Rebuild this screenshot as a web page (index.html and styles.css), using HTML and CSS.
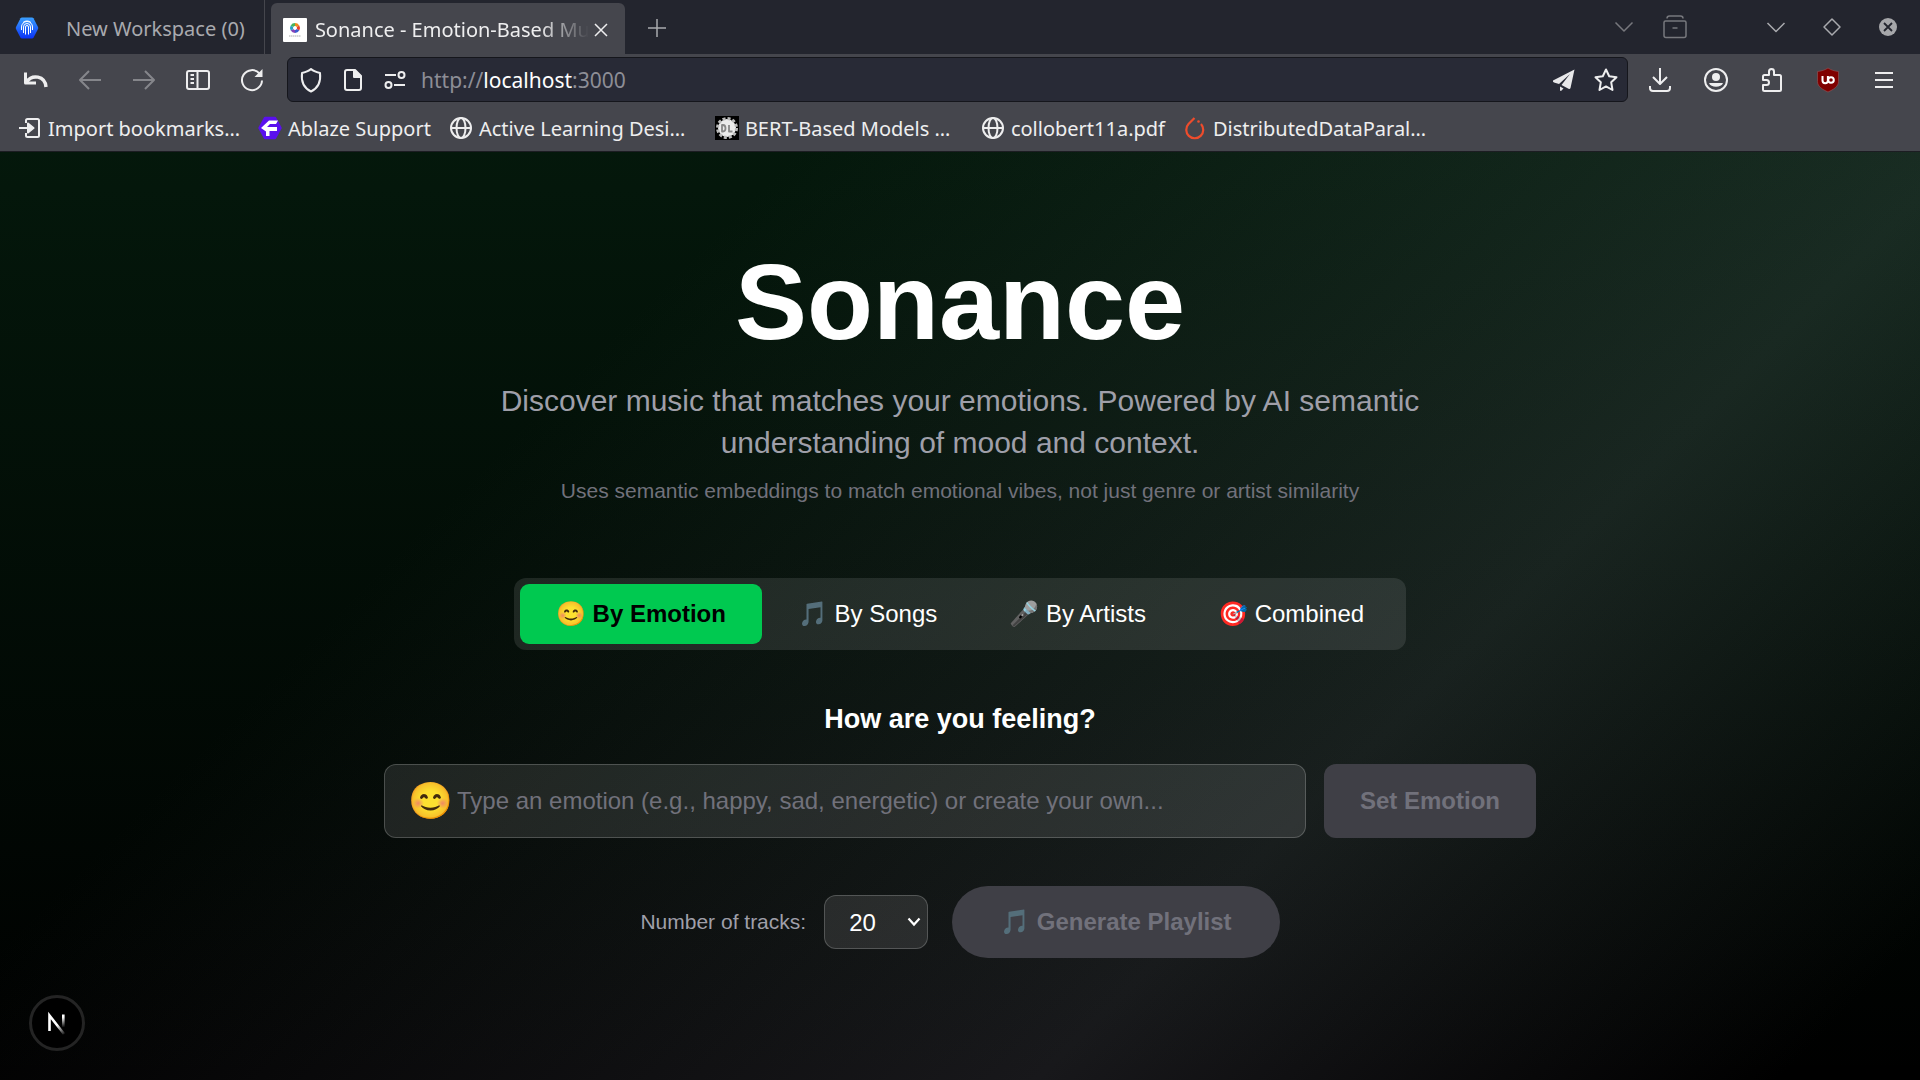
FILE: index.html
```html
<!DOCTYPE html>
<html lang="en">
<head>
    <meta charset="UTF-8">
    <meta name="viewport" content="width=device-width, initial-scale=1.0">
    <title>Sonance - Emotion-Based Music</title>
    <link rel="stylesheet" href="styles.css">
</head>
<body>
    <header class="browser">
        <div class="tab-bar">
            <button class="workspace">
                <svg width="24" height="24" viewBox="0 0 24 24">
                    <defs>
                        <linearGradient id="hex" x1="0" y1="0" x2="0" y2="1">
                            <stop offset="0" stop-color="#3aa0ff"/>
                            <stop offset="1" stop-color="#0a32f5"/>
                        </linearGradient>
                    </defs>
                    <path d="M7 1.500h10q1 0 1.500.8l4.500 8.700q.5 1 0 2l-4.500 8.700q-.5.8-1.500.8H7q-1 0-1.500-.8L1 13q-.5-1 0-2l4.500-8.700Q6 1.500 7 1.500z" fill="url(#hex)"/>
                    <path d="M6.500 14v-3a5.500 5.500 0 0 1 11 0v3M8.500 17v-6a3.500 3.500 0 0 1 7 0v6M10.500 18.500V11a1.500 1.500 0 0 1 3 0v7.500M8 6.500a6 6 0 0 1 8 0" fill="none" stroke="#fff" stroke-width="1"/>
                </svg>
                <span>New Workspace (0)</span>
            </button>
            <div class="tab">
                <svg class="favicon" width="24" height="24" viewBox="0 0 24 24">
                    <rect width="24" height="24" rx="1" fill="#fff"/>
                    <g fill="none" stroke-width="3">
                        <path d="M12 6.500a3.500 3.500 0 0 1 3 1.700" stroke="#f08b1d"/>
                        <path d="M15 8.200a3.500 3.500 0 0 1 0 3.600" stroke="#e8402c"/>
                        <path d="M15 11.800a3.500 3.500 0 0 1-3 1.700" stroke="#3b5bd0"/>
                        <path d="M12 13.500a3.500 3.500 0 0 1-3-1.700" stroke="#8442b8"/>
                        <path d="M9 11.800a3.500 3.500 0 0 1 0-3.600" stroke="#2b9fc4"/>
                        <path d="M9 8.200a3.500 3.500 0 0 1 3-1.700" stroke="#49b35b"/>
                    </g>
                    <path d="M6 18h12" stroke="#aaa" stroke-dasharray="1.500 .5"/>
                </svg>
                <span class="tab-title">Sonance - Emotion-Based Music</span>
                <button class="tab-close" aria-label="Close tab">
                    <svg width="16" height="16" viewBox="0 0 16 16"><path d="M2 2l12 12M14 2L2 14"/></svg>
                </button>
            </div>
            <button class="icon-btn new-tab" aria-label="New tab">
                <svg width="20" height="20" viewBox="0 0 20 20"><path d="M10 1v18M1 10h18"/></svg>
            </button>
            <div class="tab-tools">
                <button class="icon-btn" aria-label="List all tabs">
                    <svg width="20" height="20" viewBox="0 0 20 20"><path d="M1.500 5.500l8.500 8.500 8.500-8.500"/></svg>
                </button>
                <button class="icon-btn" aria-label="Archive">
                    <svg width="26" height="26" viewBox="0 0 26 26"><path d="M5 4.500Q5 2 7.500 2h11Q21 2 21 4.500M3.500 7h19q1.500 0 1.500 1.500v13q0 2-2 2H4q-2 0-2-2v-13Q2 7 3.500 7zM10.500 14h5"/></svg>
                </button>
            </div>
            <div class="window-controls">
                <button class="icon-btn" aria-label="Minimize">
                    <svg width="20" height="20" viewBox="0 0 20 20"><path d="M1.500 6l8.500 8.500L18.500 6"/></svg>
                </button>
                <button class="icon-btn" aria-label="Maximize">
                    <svg width="20" height="20" viewBox="0 0 20 20"><path d="M10 2l8 8-8 8-8-8z"/></svg>
                </button>
                <button class="icon-btn" aria-label="Close window">
                    <svg width="20" height="20" viewBox="0 0 20 20"><circle cx="10" cy="10" r="9" fill="#a6a7aa" stroke="none"/><path d="M6 6l8 8M14 6l-8 8" stroke="#23252e" stroke-width="1.800"/></svg>
                </button>
            </div>
        </div>

        <nav class="nav-bar">
            <button class="icon-btn" aria-label="Undo close tab">
                <svg width="26" height="26" viewBox="0 0 26 26"><path d="M2.500 5.500v10.500h10.500" stroke-width="3"/><path d="M3.500 15C9 7 22 8.500 23 20" stroke-width="3.400"/></svg>
            </button>
            <button class="icon-btn dim" aria-label="Back" disabled>
                <svg width="24" height="24" viewBox="0 0 24 24"><path d="M23 12H2M11 3l-9 9 9 9"/></svg>
            </button>
            <button class="icon-btn dim" aria-label="Forward" disabled>
                <svg width="24" height="24" viewBox="0 0 24 24"><path d="M1 12h21M13 3l9 9-9 9"/></svg>
            </button>
            <button class="icon-btn" aria-label="Sidebar">
                <svg width="26" height="22" viewBox="0 0 26 22"><rect x="2" y="2" width="22" height="18" rx="2"/><path d="M12.500 2v18M5.500 6H9M5.500 10H9M5.500 14H9"/></svg>
            </button>
            <button class="icon-btn" aria-label="Reload">
                <svg width="26" height="26" viewBox="0 0 26 26"><path d="M20.500 6.500A10 10 0 1 0 23 13.500"/><path d="M23.500 2v8h-8z" fill="#eeeeef" stroke="none"/></svg>
            </button>
            <div class="url-bar">
                <button class="icon-btn" aria-label="Tracking protection">
                    <svg width="24" height="26" viewBox="0 0 24 26"><path d="M12 2c2 2 5 3 9 4 1 8-2 15-9 18.500C5 21 2 14 3 6c4-1 7-2 9-4z"/></svg>
                </button>
                <button class="icon-btn" aria-label="Page information">
                    <svg width="20" height="24" viewBox="0 0 20 24"><path d="M4 2h8l6 6v12q0 2-2 2H4q-2 0-2-2V4q0-2 2-2z"/><path d="M11 2v7h7z" fill="#eeeeef"/></svg>
                </button>
                <button class="icon-btn" aria-label="Permissions">
                    <svg width="24" height="20" viewBox="0 0 24 20"><path d="M2 5h11M11 15h11"/><circle cx="18.500" cy="5" r="3"/><circle cx="5.500" cy="15" r="3"/></svg>
                </button>
                <div class="url" role="textbox" aria-label="Address" contenteditable="true" spellcheck="false">http://<b>localhost</b>:3000</div>
                <button class="icon-btn" aria-label="Send tab">
                    <svg width="24" height="24" viewBox="0 0 24 24"><path d="M22.500 1.500L1 12.500q-.5 1.500 1 2l5 1.500L18 6 9.500 17l7.500 4q1 .3 1.500-1zM8 18.500l3.500 2-2.500 2.500q-1 0-1-1z" fill="#e8e8ea" stroke="none"/></svg>
                </button>
                <button class="icon-btn" aria-label="Bookmark this page">
                    <svg width="26" height="26" viewBox="0 0 26 26"><path d="M13 2.500l3.200 6.700 7.300 1-5.300 5.100 1.300 7.700-6.500-3.600L6.500 23l1.300-7.700-5.300-5.100 7.300-1z"/></svg>
                </button>
            </div>
            <div class="nav-tools">
                <button class="icon-btn" aria-label="Downloads">
                    <svg width="24" height="26" viewBox="0 0 24 26"><path d="M12 1v16M5 10l7 7 7-7M2 19v2q0 3 3 3h14q3 0 3-3v-2"/></svg>
                </button>
                <button class="icon-btn" aria-label="Account">
                    <svg width="26" height="26" viewBox="0 0 26 26"><circle cx="13" cy="13" r="11"/><circle cx="13" cy="10" r="4" fill="#eeeeef" stroke="none"/><path d="M6 16h14c-1.500 5-12.500 5-14 0z" fill="#eeeeef" stroke="none"/></svg>
                </button>
                <button class="icon-btn" aria-label="Extensions">
                    <svg width="24" height="26" viewBox="0 0 24 26"><path d="M4.500 8H9V4.500a2.500 2.500 0 0 1 5 0V8h5.500q1.500 0 1.500 1.500v13q0 1.500-1.500 1.500h-15Q3 24 3 22.500V18h3.500a2.500 2.500 0 0 0 0-5H3V9.500Q3 8 4.500 8z"/></svg>
                </button>
                <button class="icon-btn" aria-label="uBlock Origin">
                    <svg width="24" height="26" viewBox="0 0 24 26"><path d="M12 1c3 2 6 3 10.500 3.500v10c0 5-5 8-10.500 10.500C6.500 22.500 1.500 19.500 1.500 14.500v-10C6 4 9 3 12 1z" fill="#800000" stroke="#93585a" stroke-width=".6"/><path d="M6.500 9v4.500a2.700 2.700 0 0 0 5.400 0V9" stroke="#fff"/><circle cx="15" cy="13" r="2.800" stroke="#fff"/></svg>
                </button>
                <button class="icon-btn" aria-label="Menu">
                    <svg width="22" height="18" viewBox="0 0 22 18"><path d="M2 2h18M2 9h18M2 16h18"/></svg>
                </button>
            </div>
        </nav>

        <div class="bookmarks">
            <a class="bookmark" href="#">
                <svg width="24" height="24" viewBox="0 0 24 24"><path d="M8 7V4.500Q8 3 9.500 3h10Q21 3 21 4.500v15q0 1.500-1.500 1.500h-10Q8 21 8 19.500V17M1 12h10"/><path d="M10 7.500l5.500 4.500-5.500 4.500z" fill="#eeeeef"/></svg>
                <span>Import bookmarks…</span>
            </a>
            <a class="bookmark" href="#">
                <svg width="24" height="24" viewBox="0 0 24 24"><path d="M7 2h10l5.500 10L17 22H7L1.500 12z" fill="#5a10ee" stroke="#5a10ee" stroke-width="2.500" stroke-linejoin="round"/><path d="M20 4.500h-9L3 12l5 3.500V20h3.500v-5H19v-4H9l3-3h6z" fill="#fff" stroke="none"/></svg>
                <span>Ablaze Support</span>
            </a>
            <a class="bookmark bookmark-long" href="#">
                <svg width="24" height="24" viewBox="0 0 24 24"><circle cx="12" cy="12" r="10"/><ellipse cx="12" cy="12" rx="4.500" ry="10"/><path d="M2 12h20"/></svg>
                <span>Active Learning Desi…</span>
            </a>
            <a class="bookmark bookmark-long" href="#">
                <svg width="24" height="24" viewBox="0 0 24 24"><path d="M0 0h24v24H0z" fill="#000" stroke="none"/><circle cx="12" cy="12" r="9" fill="#ececec" stroke="none"/><circle cx="12" cy="12" r="9.500" stroke="#bbb" stroke-width="3" stroke-dasharray="3 2"/><path d="M7 9v6.500h1q2.500 0 2.500-3.200T8 9zM14 9v6.500h3.500" stroke="#888" stroke-width="1.800"/></svg>
                <span>BERT-Based Models …</span>
            </a>
            <a class="bookmark" href="#">
                <svg width="24" height="24" viewBox="0 0 24 24"><circle cx="12" cy="12" r="10"/><ellipse cx="12" cy="12" rx="4.500" ry="10"/><path d="M2 12h20"/></svg>
                <span>collobert11a.pdf</span>
            </a>
            <a class="bookmark" href="#">
                <svg width="24" height="24" viewBox="0 0 24 24"><path d="M11.500 2L5.500 8a8.500 8.500 0 1 0 12.500 0" stroke="#ee4c2c" stroke-width="2.200"/><circle cx="15.500" cy="5.500" r="1.300" fill="#ee4c2c" stroke="none"/></svg>
                <span>DistributedDataParal…</span>
            </a>
        </div>
    </header>

    <main class="app">
        <h1>Sonance</h1>
        <p class="tagline">Discover music that matches your emotions. Powered by AI semantic understanding of mood and context.</p>
        <p class="note">Uses semantic embeddings to match emotional vibes, not just genre or artist similarity</p>

        <div class="modes">
            <button class="mode active">😊 By Emotion</button>
            <button class="mode">🎵 By Songs</button>
            <button class="mode">🎤 By Artists</button>
            <button class="mode">🎯 Combined</button>
        </div>

        <h2><label for="emotion">How are you feeling?</label></h2>
        <div class="emotion-row">
            <div class="emotion-field">
                <span class="emotion-icon">😊</span>
                <input type="text" id="emotion" placeholder="Type an emotion (e.g., happy, sad, energetic) or create your own...">
            </div>
            <button class="btn" disabled>Set Emotion</button>
        </div>

        <div class="generate-row">
            <label for="tracks">Number of tracks:</label>
            <div class="select-wrap">
                <select id="tracks">
                    <option>10</option>
                    <option selected>20</option>
                    <option>30</option>
                    <option>50</option>
                </select>
                <svg class="caret" width="14" height="10" viewBox="0 0 14 10"><path d="M1.500 1.500L7 7.500l5.500-6" fill="none" stroke="#fff" stroke-width="2.200"/></svg>
            </div>
            <button class="btn btn-pill" disabled>🎵 Generate Playlist</button>
        </div>
    </main>

    <button class="dev-badge" aria-label="Next.js dev tools">
        <svg width="24" height="24" viewBox="0 0 24 24">
            <defs>
                <linearGradient id="stem" x1="0" y1="0" x2="0" y2="1">
                    <stop offset=".2" stop-color="#fff"/>
                    <stop offset="1" stop-color="#fff" stop-opacity="0"/>
                </linearGradient>
                <linearGradient id="slash" gradientUnits="userSpaceOnUse" x1="12" y1="14" x2="20" y2="24">
                    <stop offset="0" stop-color="#fff"/>
                    <stop offset="1" stop-color="#fff" stop-opacity="0"/>
                </linearGradient>
            </defs>
            <path d="M4.500 20V4.500L19 23" fill="none" stroke="url(#slash)" stroke-width="2.600"/>
            <rect x="17" y="3.500" width="2.600" height="13" fill="url(#stem)"/>
        </svg>
    </button>
</body>
</html>
```
FILE: styles.css
```css
* {
    box-sizing: border-box;
}
body {
    margin: 0;
    min-height: 100vh;
    display: flex;
    flex-direction: column;
    background: #000;
    color: #fff;
    font-family: "Liberation Sans", Arial, sans-serif;
}
button {
    font: inherit;
    color: inherit;
    border: none;
    background: none;
    padding: 0;
}

/* browser chrome */
.browser {
    background: #45464d;
    border-bottom: 1px solid #1c1d22;
    font-family: "Noto Sans", sans-serif;
    font-size: 20px;
    color: #eeeeef;
}
.browser svg {
    display: block;
    flex: none;
}
.tab-bar {
    display: flex;
    height: 54px;
    background: #23252e;
    color: #a9aaae;
}
.icon-btn {
    display: flex;
    align-items: center;
    justify-content: center;
    width: 54px;
    flex: none;
}
.icon-btn svg,
.tab-close svg,
.bookmark svg {
    fill: none;
    stroke: currentColor;
    stroke-width: 2;
    stroke-linejoin: round;
}
.tab-bar .icon-btn svg {
    stroke-width: 1.5;
}
.workspace {
    display: flex;
    align-items: center;
    gap: 27px;
    padding: 2px 19px 0 15px;
    border-right: 1px solid #45464d;
}
.tab {
    display: flex;
    align-items: center;
    width: 354px;
    margin: 3px 0 0 6px;
    padding: 2px 12px 0;
    border-radius: 6px 6px 0 0;
    background: #45464d;
    color: #eeeeef;
}
.tab-title {
    flex: 1;
    margin-left: 8px;
    overflow: hidden;
    white-space: nowrap;
    mask-image: linear-gradient(to left, transparent, #000 50px);
}
.tab-close {
    padding: 4px;
}
.tab-close svg {
    stroke-width: 1.5;
}
.new-tab {
    width: 64px;
    padding-top: 2px;
}
.tab-tools {
    display: flex;
    margin-left: auto;
    color: #77787d;
}
.tab-tools .icon-btn {
    width: 51px;
}
.window-controls {
    display: flex;
    margin-left: 48px;
    padding-right: 4px;
}
.window-controls .icon-btn {
    width: 56px;
}
.nav-bar {
    display: flex;
    height: 51px;
    padding: 3px 8px 3px 9px;
}
.dim {
    color: #85868b;
}
.url-bar {
    display: flex;
    flex: 1;
    align-items: center;
    margin: 0 4px 0 8px;
    padding: 0 0 0 2px;
    border: 1px solid #15161c;
    border-radius: 6px;
    background: #282a36;
}
.url-bar .icon-btn {
    width: 42px;
}
.url {
    flex: 1;
    padding-left: 5px;
    font-size: 21px;
    color: #8d8e96;
}
.url b {
    font-weight: normal;
    color: #fff;
}
.nav-tools {
    display: flex;
}
.nav-tools .icon-btn {
    width: 56px;
}
.bookmarks {
    display: flex;
    gap: 18px;
    height: 46px;
    padding: 0 18px;
    align-items: center;
}
.bookmark {
    display: flex;
    align-items: center;
    gap: 6px;
    color: inherit;
    text-decoration: none;
    white-space: nowrap;
}
.bookmark-long {
    width: 248px;
}

/* page */
.app {
    flex: 1;
    display: flex;
    flex-direction: column;
    align-items: center;
    padding: 96px 24px;
    background:
        linear-gradient(to bottom, rgba(34, 197, 94, 0.12), rgba(34, 197, 94, 0)),
        linear-gradient(135deg, #000 28%, #18181b 69%, #000 95%);
}
h1 {
    margin: 0 0 24px;
    font-size: 108px;
    line-height: 108px;
}
.tagline {
    max-width: 1008px;
    margin: 0 0 12px;
    font-size: 30px;
    line-height: 42px;
    text-align: center;
    color: #9f9fa9;
}
.note {
    margin: 0 0 72px;
    font-size: 21px;
    line-height: 30px;
    color: #71717b;
}
.modes {
    display: flex;
    margin-bottom: 48px;
    padding: 6px;
    border-radius: 12px;
    background: rgba(255, 255, 255, 0.1);
}
.mode {
    padding: 12px 36px;
    border-radius: 9px;
    font-size: 24px;
    line-height: 36px;
}
.mode.active {
    background: #00c950;
    color: #000;
    font-weight: bold;
}
h2 {
    margin: 0 0 24px;
    font-size: 27px;
    line-height: 42px;
}
.emotion-row {
    display: flex;
    gap: 18px;
    width: 100%;
    max-width: 1152px;
    margin-bottom: 48px;
}
.emotion-field {
    position: relative;
    flex: 1;
}
.emotion-icon {
    position: absolute;
    left: 24px;
    top: 0;
    font-size: 36px;
    line-height: 74px;
}
.emotion-field input {
    display: block;
    width: 100%;
    height: 74px;
    padding: 0 24px 0 72px;
    border: 1px solid rgba(255, 255, 255, 0.2);
    border-radius: 12px;
    background: rgba(255, 255, 255, 0.1);
    color: #fff;
    font: inherit;
    font-size: 24px;
}
.emotion-field input::placeholder {
    color: #71717b;
}
.btn {
    padding: 18px 36px;
    border-radius: 12px;
    background: #3f3f46;
    color: #71717b;
    font-size: 24px;
    line-height: 36px;
    font-weight: bold;
}
.btn-pill {
    margin-left: 6px;
    padding: 18px 48px;
    border-radius: 36px;
}
.generate-row {
    display: flex;
    align-items: center;
    gap: 18px;
    font-size: 21px;
    color: #9f9fa9;
}
.select-wrap {
    position: relative;
}
.select-wrap select {
    display: block;
    appearance: none;
    width: 104px;
    height: 54px;
    padding: 0 24px;
    border: 1px solid rgba(255, 255, 255, 0.2);
    border-radius: 12px;
    background: rgba(255, 255, 255, 0.1);
    color: #fff;
    font: inherit;
    font-size: 24px;
}
.select-wrap option {
    background: #18181b;
}
.caret {
    position: absolute;
    right: 7px;
    top: 22px;
    pointer-events: none;
}
.dev-badge {
    position: fixed;
    left: 29px;
    bottom: 29px;
    display: flex;
    align-items: center;
    justify-content: center;
    width: 56px;
    height: 56px;
    border: 3px solid #242424;
    border-radius: 50%;
    background: #000;
}
```
